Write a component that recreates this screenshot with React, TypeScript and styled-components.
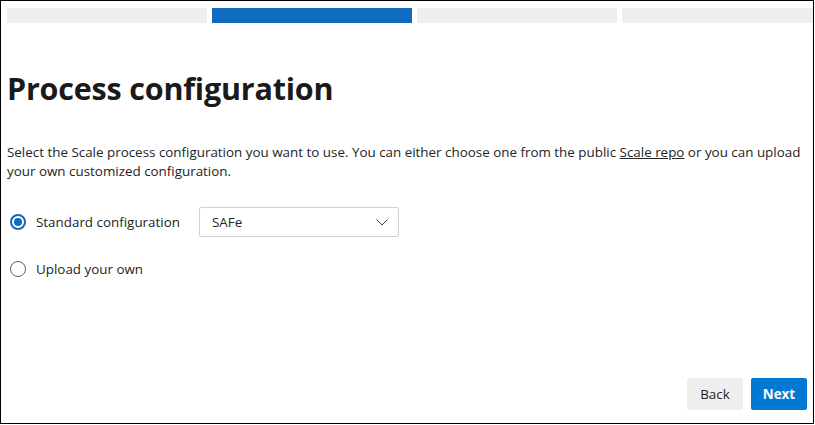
import React from "react";
import styled, { createGlobalStyle } from "styled-components";

const Global = createGlobalStyle`
  html, body { margin: 0; padding: 0; background: #fff; }
  body { font-family: "Open Sans", "Noto Sans", sans-serif; color: #242424; }
  * { box-sizing: border-box; }
`;

const Frame = styled.div`
  width: 814px;
  height: 424px;
  border: 1px solid #000;
  padding: 7px 6px 13px 6px;
  display: flex;
  flex-direction: column;
  overflow: hidden;
`;

const Steps = styled.div`
  display: flex;
  gap: 5px;
  margin-right: -6px;
  overflow: hidden;
  flex-shrink: 0;
`;

const Step = styled.div<{ $active?: boolean }>`
  flex: 0 0 200px;
  height: 15px;
  background: ${(p) => (p.$active ? "#0f6cbd" : "#eeeeee")};
`;

const Title = styled.h1`
  margin: 45px 0 0 0;
  font-size: 30.5px;
  line-height: 40px;
  font-weight: 700;
  color: #1a1a1a;
  letter-spacing: -0.2px;
`;

const Description = styled.p`
  margin: 35px 0 0 0;
  font-size: 13.4px;
  line-height: 19px;
  color: #242424;
  width: 800px;
`;

const Link = styled.a`
  color: #242424;
  text-decoration: underline;
`;

const Options = styled.div`
  margin-top: 26px;
  display: flex;
  flex-direction: column;
  gap: 17px;
`;

const OptionRow = styled.label`
  display: flex;
  align-items: center;
  height: 30px;
  padding-left: 3px;
  font-size: 13.4px;
  color: #242424;
`;

const Radio = styled.span<{ $checked?: boolean }>`
  width: 16px;
  height: 16px;
  border-radius: 50%;
  border: ${(p) => (p.$checked ? "2px solid #0f6cbd" : "1px solid #616161")};
  display: flex;
  align-items: center;
  justify-content: center;
  margin-right: 10px;
  flex-shrink: 0;
  &::after {
    content: "";
    display: ${(p) => (p.$checked ? "block" : "none")};
    width: 8px;
    height: 8px;
    border-radius: 50%;
    background: #0f6cbd;
  }
`;

const LabelText = styled.span`
  width: 163px;
`;

const Select = styled.div`
  width: 200px;
  height: 30px;
  border: 1px solid #d1d1d1;
  border-radius: 2px;
  display: flex;
  align-items: center;
  justify-content: space-between;
  padding: 0 10px 0 12px;
  font-size: 13.4px;
  color: #242424;
`;

const Spacer = styled.div`
  flex: 1;
`;

const Footer = styled.div`
  display: flex;
  justify-content: flex-end;
  gap: 8px;
`;

const Button = styled.button<{ $primary?: boolean }>`
  height: 32px;
  min-width: 56px;
  padding: 0 10px;
  border: none;
  border-radius: 2px;
  font-family: "Open Sans", "Noto Sans", sans-serif;
  font-size: 13.4px;
  font-weight: ${(p) => (p.$primary ? 700 : 400)};
  background: ${(p) => (p.$primary ? "#0078d4" : "#efefef")};
  color: ${(p) => (p.$primary ? "#fff" : "#242424")};
`;

export default function App() {
  return (
    <>
      <Global />
      <Frame>
        <Steps>
          <Step />
          <Step $active />
          <Step />
          <Step />
        </Steps>
        <Title>Process configuration</Title>
        <Description>
          Select the Scale process configuration you want to use. You can either choose one from the public{" "}
          <Link href="#">Scale repo</Link> or you can upload your own customized configuration.
        </Description>
        <Options>
          <OptionRow>
            <Radio $checked />
            <LabelText>Standard configuration</LabelText>
            <Select>
              <span>SAFe</span>
              <svg width="12" height="7" viewBox="0 0 12 7" fill="none">
                <path d="M0.5 0.5 L6 6 L11.5 0.5" stroke="#424242" strokeWidth="1" />
              </svg>
            </Select>
          </OptionRow>
          <OptionRow>
            <Radio />
            <LabelText>Upload your own</LabelText>
          </OptionRow>
        </Options>
        <Spacer />
        <Footer>
          <Button>Back</Button>
          <Button $primary>Next</Button>
        </Footer>
      </Frame>
    </>
  );
}
